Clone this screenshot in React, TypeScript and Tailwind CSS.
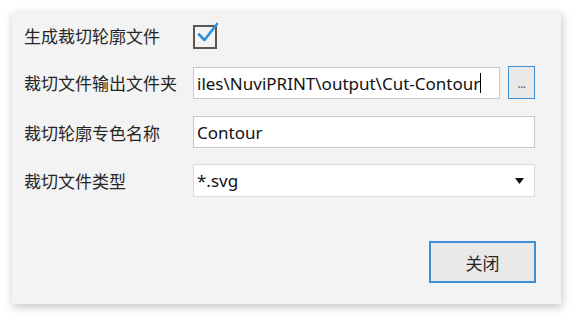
const cjk = { fontFamily: '"Noto Sans CJK SC", "Noto Sans", sans-serif' };
const latin = { fontFamily: '"Noto Sans", "Noto Sans CJK SC", sans-serif' };

function Label({ text }: { text: string }) {
  return (
    <div className="w-[169px] shrink-0 text-[17px] leading-none text-[#262626]" style={cjk}>
      {text}
    </div>
  );
}

export default function App() {
  return (
    <div className="w-[576px] h-[321px] bg-white pl-[12px] pt-[12px]">
      <div className="w-[549px] h-[292px] bg-[#f3f3f3] shadow-[1px_3px_9px_rgba(0,0,0,0.24)] flex flex-col pl-[12px] pr-[26px]">
        {/* checkbox row */}
        <div className="mt-[10px] h-[27px] flex items-center">
          <Label text="生成裁切轮廓文件" />
          <div className="relative w-[24px] h-[24px] mt-[2px] border-2 border-[#575757] bg-[#f3f3f3]">
            <svg className="absolute -top-[6px] left-[1px]" width="24" height="24" viewBox="0 0 24 24">
              <path d="M3 13.5 L8.5 19 L21 3" fill="none" stroke="#2e8fdc" strokeWidth="2.6" strokeLinecap="round" strokeLinejoin="round" />
            </svg>
          </div>
        </div>

        {/* output folder */}
        <div className="mt-[17px] h-[33px] flex items-center">
          <Label text="裁切文件输出文件夹" />
          <div className="flex-1 h-[32px] mt-[1px] bg-white border border-[#c9c9d1] flex items-center px-[3px] overflow-hidden">
            <span className="text-[17px] leading-none text-[#111] whitespace-nowrap" style={latin}>
              iles\NuviPRINT\output\Cut-Contour
            </span>
            <span className="w-[1px] h-[20px] bg-black" />
          </div>
          <div className="ml-[8px] w-[27px] h-[33px] border border-[#3c90d8] bg-[#ebe9e8] flex items-end justify-center pb-[8px]">
            <span className="text-[12px] leading-none text-[#555] tracking-[-0.5px]" style={latin}>...</span>
          </div>
        </div>

        {/* spot colour name */}
        <div className="mt-[17px] h-[32px] flex items-center">
          <Label text="裁切轮廓专色名称" />
          <div className="flex-1 h-[32px] bg-white border border-[#c9c9d1] flex items-center px-[3px]">
            <span className="text-[17px] leading-none text-[#111]" style={latin}>Contour</span>
          </div>
        </div>

        {/* file type */}
        <div className="mt-[16px] h-[33px] flex items-center">
          <Label text="裁切文件类型" />
          <div className="flex-1 h-[33px] bg-white border border-[#d9d9e1] flex items-center justify-between pl-[3px] pr-[10px]">
            <span className="text-[17px] leading-none text-[#111]" style={latin}>*.svg</span>
            <svg width="9" height="6" viewBox="0 0 9 6">
              <path d="M0 0 H9 L4.5 6 Z" fill="#111" />
            </svg>
          </div>
        </div>

        <div className="mt-[44px] flex justify-end -mr-[1px]">
          <button className="w-[107px] h-[42px] border-2 border-[#3c90d8] bg-[#ebe9e8] text-[17px] leading-none text-[#262626]" style={cjk}>
            关闭
          </button>
        </div>
      </div>
    </div>
  );
}
